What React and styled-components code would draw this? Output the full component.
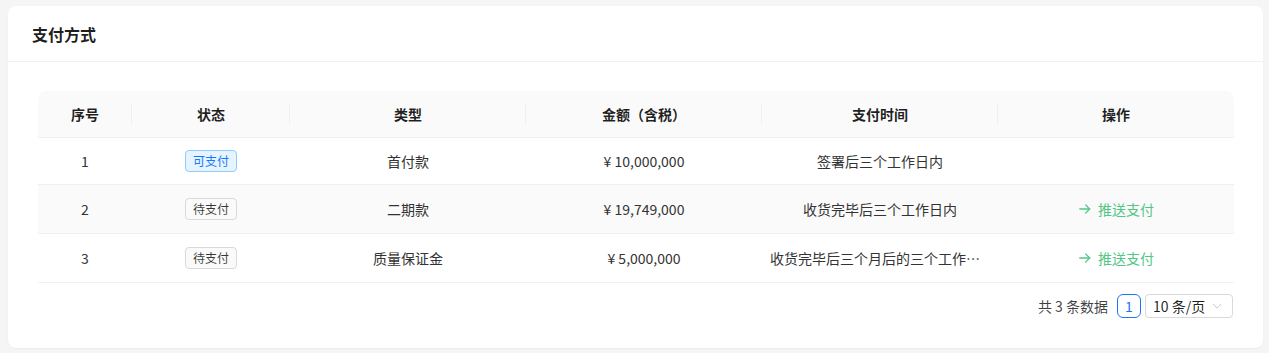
import React from "react";
import styled, { createGlobalStyle } from "styled-components";

const GlobalStyle = createGlobalStyle`
  html, body { margin: 0; padding: 0; background: #f5f5f5; }
  body {
    font-family: "Noto Sans CJK SC", "Noto Sans", sans-serif;
    font-size: 14px;
    color: rgba(0, 0, 0, 0.88);
  }
  * { box-sizing: border-box; }
`;

const Page = styled.div`
  padding: 6px 6px 6px 8px;
  min-height: 353px;
`;

const Card = styled.section`
  background: #fff;
  border-radius: 8px;
  box-shadow: 0 1px 2px rgba(0, 0, 0, 0.04);
`;

const CardHeader = styled.header`
  height: 56px;
  display: flex;
  align-items: center;
  padding: 0 24px;
  border-bottom: 1px solid #f0f0f0;
`;

const Title = styled.h2`
  margin: 0;
  font-size: 16px;
  font-weight: 600;
  color: rgba(0, 0, 0, 0.88);
`;

const CardBody = styled.div`
  padding: 29px 30px 30px 30px;
`;

const Table = styled.table`
  width: 100%;
  table-layout: fixed;
  border-collapse: separate;
  border-spacing: 0;
`;

const Th = styled.th`
  position: relative;
  background: #fafafa;
  height: 47px;
  padding: 0 8px;
  font-weight: 600;
  text-align: center;
  color: rgba(0, 0, 0, 0.88);
  border-bottom: 1px solid #f0f0f0;
  &:first-child { border-top-left-radius: 8px; }
  &:last-child { border-top-right-radius: 8px; }
  &:not(:last-child)::before {
    content: "";
    position: absolute;
    right: 0;
    top: 50%;
    width: 1px;
    height: 22px;
    transform: translateY(-50%);
    background: #f0f0f0;
  }
`;

const Tr = styled.tr`
  background: ${(p) => (p.$shaded ? "#fafafa" : "#fff")};
`;

const Td = styled.td`
  padding: 0 8px;
  color: #333;
  border-bottom: 1px solid #f0f0f0;
`;

const Cell = styled.div`
  display: flex;
  align-items: center;
  justify-content: center;
  height: ${(p) => p.$h}px;
  margin: 12px 0;
  line-height: 22px;
  min-width: 0;
`;

const Clip = styled.span`
  min-width: 0;
  white-space: nowrap;
  overflow: hidden;
  text-overflow: ellipsis;
`;

const Tag = styled.span`
  display: inline-block;
  height: 22px;
  line-height: 20px;
  padding: 0 7px;
  font-size: 12px;
  border-radius: 4px;
  border: 1px solid ${(p) => (p.$blue ? "#91caff" : "#d9d9d9")};
  background: ${(p) => (p.$blue ? "#e6f4ff" : "#fafafa")};
  color: ${(p) => (p.$blue ? "#1677ff" : "rgba(0,0,0,0.78)")};
`;

const ActionButton = styled.button`
  display: inline-flex;
  align-items: center;
  gap: 6px;
  height: 24px;
  padding: 0;
  border: none;
  background: transparent;
  font: inherit;
  font-size: 14px;
  color: #52c785;
  cursor: pointer;
`;

const Pager = styled.nav`
  display: flex;
  justify-content: flex-end;
  align-items: center;
  margin-top: 11px;
  height: 24px;
`;

const Total = styled.span`
  margin-right: 9px;
  color: rgba(0, 0, 0, 0.75);
`;

const PageItem = styled.span`
  display: inline-flex;
  align-items: center;
  justify-content: center;
  min-width: 24px;
  height: 24px;
  border: 1px solid #1677ff;
  border-radius: 6px;
  color: #1677ff;
  margin-right: 4px;
`;

const SizeSelect = styled.span`
  display: inline-flex;
  align-items: center;
  justify-content: space-between;
  width: 88px;
  height: 24px;
  padding: 0 10px 0 7px;
  border: 1px solid #d9d9d9;
  border-radius: 4px;
  color: rgba(0, 0, 0, 0.88);
`;

const cols = [94, 158, 236, 236, 236, 236];

const rows = [
  { no: 1, status: "可支付", blue: true, type: "首付款", amount: "¥ 10,000,000", time: "签署后三个工作日内", action: false },
  { no: 2, status: "待支付", blue: false, type: "二期款", amount: "¥ 19,749,000", time: "收货完毕后三个工作日内", action: true, shaded: true },
  { no: 3, status: "待支付", blue: false, type: "质量保证金", amount: "¥ 5,000,000", time: "收货完毕后三个月后的三个工作日内", action: true },
];

const Arrow = () => (
  <svg width="14" height="14" viewBox="0 0 24 24" fill="none" stroke="currentColor" strokeWidth="2.2" strokeLinecap="round" strokeLinejoin="round">
    <path d="M3 12h17" />
    <path d="M13 5l7 7-7 7" />
  </svg>
);

const Chevron = () => (
  <svg width="10" height="10" viewBox="0 0 24 24" fill="none" stroke="#bfbfbf" strokeWidth="2" strokeLinecap="round" strokeLinejoin="round">
    <path d="M3 8l9 9 9-9" />
  </svg>
);

export default function App() {
  return (
    <>
      <GlobalStyle />
      <Page>
        <Card>
          <CardHeader>
            <Title>支付方式</Title>
          </CardHeader>
          <CardBody>
            <Table>
              <colgroup>
                {cols.map((w, i) => (
                  <col key={i} style={{ width: w }} />
                ))}
              </colgroup>
              <thead>
                <tr>
                  <Th>序号</Th>
                  <Th>状态</Th>
                  <Th>类型</Th>
                  <Th>金额（含税）</Th>
                  <Th>支付时间</Th>
                  <Th>操作</Th>
                </tr>
              </thead>
              <tbody>
                {rows.map((r) => {
                  const h = r.action ? 24 : 22;
                  return (
                    <Tr key={r.no} $shaded={r.shaded}>
                      <Td><Cell $h={h}>{r.no}</Cell></Td>
                      <Td>
                        <Cell $h={h}>
                          <Tag $blue={r.blue}>{r.status}</Tag>
                        </Cell>
                      </Td>
                      <Td><Cell $h={h}>{r.type}</Cell></Td>
                      <Td><Cell $h={h}>{r.amount}</Cell></Td>
                      <Td><Cell $h={h}><Clip title={r.time}>{r.time}</Clip></Cell></Td>
                      <Td>
                        <Cell $h={h}>
                          {r.action && (
                            <ActionButton>
                              <Arrow />
                              推送支付
                            </ActionButton>
                          )}
                        </Cell>
                      </Td>
                    </Tr>
                  );
                })}
              </tbody>
            </Table>
            <Pager>
              <Total>共 3 条数据</Total>
              <PageItem>1</PageItem>
              <SizeSelect>
                10 条/页
                <Chevron />
              </SizeSelect>
            </Pager>
          </CardBody>
        </Card>
      </Page>
    </>
  );
}
